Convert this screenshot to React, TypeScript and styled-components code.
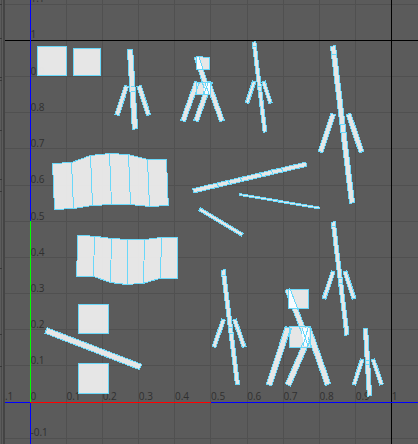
import React from "react";
import styled, { createGlobalStyle } from "styled-components";

const GlobalStyle = createGlobalStyle`
  body { margin: 0; background: #5b5b5b; overflow: hidden; }
`;
const Editor = styled.main`
  display: flex;
  width: 418px;
  height: 444px;
`;
const Gutter = styled.svg`
  box-sizing: border-box;
  display: block;
  width: 5px;
  height: 444px;
  flex: none;
  background: #5b5b5b;
  border-right: 2px solid #444;
  shape-rendering: crispEdges;
`;
const Viewport = styled.svg`
  display: block;
  width: 413px;
  height: 444px;
  flex: none;
  shape-rendering: crispEdges;
`;
const GridLine = styled.line`
  stroke: #505050;
  stroke-width: 1px;
`;
const Axis = styled.line<{ $color: string }>`
  stroke: ${(p) => p.$color};
  stroke-width: 1px;
`;
const Label = styled.text`
  font: 500 10px "Open Sans", "Noto Sans", sans-serif;
  fill: #303030;
`;
const Face = styled.polygon`
  fill: #e9e9e9;
  fill-opacity: 0.98;
  stroke: #69d8fa;
  stroke-width: 1px;
`;
const Overlap = styled.polygon`
  fill: #f8fbff;
`;
const Edge = styled.polyline`
  fill: none;
  stroke: #69d8fa;
  stroke-width: 1px;
`;
const BoxOutline = styled.polygon`
  fill: none;
  stroke: #69d8fa;
  stroke-width: 1px;
`;

const columns = [66, 102, 138, 174, 210, 247, 283, 319, 355];
const rows = [4, 76, 112, 148, 185, 221, 257, 293, 329, 365, 438];
const gutterMarks = [4, 38, 77, 80, 130, 179, 191, 268, 334, 366];

type Bar = [number, number, number, number, number];
const bars: Bar[] = [
  [130, 49.5, 135, 129, 5],
  [126.5, 86, 117, 115, 4],
  [139, 86, 148.5, 115, 4],
  [196.5, 57, 208, 92, 4.5],
  [197, 82, 183, 121, 4.5],
  [210, 82, 196, 121, 4.5],
  [208, 82, 222, 121, 4.5],
  [254, 42, 265, 132, 3.4],
  [254.2, 81.5, 247, 103, 3.2],
  [263.5, 81.5, 270.5, 103, 3.2],
  [333, 46, 352, 203, 4.8],
  [333.2, 114, 320.5, 152, 4.6],
  [348.5, 114, 361.5, 152, 4.6],
  [193.2, 190.8, 306.3, 164.2, 4],
  [239.7, 194.5, 319.2, 208, 1.5],
  [199.6, 209.2, 242.3, 234.8, 3],
  [333.2, 222, 347, 335, 3.8],
  [333.2, 271.5, 324, 298.5, 3.5],
  [345, 271.5, 354, 298.5, 3.5],
  [223.2, 270, 237.5, 384.5, 3.8],
  [223.5, 319.5, 214, 347, 3.5],
  [234.5, 319.5, 244.2, 347, 3.5],
  [287.5, 289.5, 308, 342, 4.8],
  [288, 327.5, 269, 385, 5.4],
  [307, 341, 288, 385, 5.4],
  [308, 328, 328, 384.5, 5.4],
  [365.5, 328.5, 369.5, 396, 4],
  [362.3, 359.5, 354, 384.5, 3.4],
  [373, 359.5, 381.5, 384.5, 3.4],
  [46, 330.5, 140.5, 367, 5.5],
];

function corners([x1, y1, x2, y2, w]: Bar): string {
  const width = w + 0.3;
  const length = Math.hypot(x2 - x1, y2 - y1);
  const nx = (-(y2 - y1) / length) * width / 2;
  const ny = ((x2 - x1) / length) * width / 2;
  return [[x1 + nx, y1 + ny], [x2 + nx, y2 + ny], [x2 - nx, y2 - ny], [x1 - nx, y1 - ny]]
    .map((p) => p.join(",")).join(" ");
}

const shells = [
  "37.5,46.5 66.5,46.5 66.5,75.5 37.5,75.5",
  "73.5,48.5 100.5,48.5 100.5,75.5 73.5,75.5",
  "78.5,304.5 108.5,304.5 108.5,333.5 78.5,333.5",
  "78.5,363.5 108.5,363.5 108.5,393.5 78.5,393.5",
  "52.5,163.5 71.5,162.5 90.5,155.5 109.5,153.5 128.5,154.5 147.5,159.5 166.5,159.5 168.3,205.5 149.5,206.5 130.5,204.5 111.5,204.5 92.5,205.5 73.5,208.5 54.5,209.5",
  "77.5,235.5 94.5,236.2 111.5,238.5 127.5,239.5 144.5,239.5 161.5,237.5 177.8,237.5 177.4,278.5 160.5,278.2 143.5,283.3 126.5,284.5 110.5,282.5 93.5,276.5 76.7,276.5",
];
const seams = [
  "71.5,162 73.5,208", "90.5,155 92.5,205", "109.5,153 111.5,204", "128.5,154 130.5,204", "147.5,160 149.5,206",
  "94.5,236 93.5,276", "111.5,238 110.5,282", "127.5,239 127.4,284", "144.5,239 143.5,283", "161.5,237 160.5,278",
  "131,86.5 135,86.5", "131,91.5 135,91.5",
  "253,46.5 257,46.5", "258,86.5 261,86.5", "258,91.5 262,91.5",
  "331,54.5 336,54.5", "340,124.5 345,124.5", "341,132.5 346,132.5",
  "332,226.5 336,226.5", "338,278.5 342,278.5", "338,283.5 342,283.5",
  "222,275.5 226,275.5", "229,327.5 232,327.5", "229,333.5 233,333.5",
  "366,360.5 370,360.5", "366,364.5 370,364.5",
  "217,183 219,188", "228,180 230,185", "240,177 242,182", "260,172 262,177", "271,169 273,175", "281,167 283,172",
];

const boxes = [
  "196.5,56.5 209.5,57.5 209.5,69.5 196.5,69.5",
  "196.5,82.5 210.5,82.5 210.5,94.5 196.5,94.5",
  "288.5,289.5 308.5,289.5 308.5,308.5 288.5,308.5",
  "289.5,326.5 310.5,326.5 310.5,347.5 289.5,347.5",
];
const overlaps = [
  "197,57 199,57 203,69 197,69",
  "205,83 210,83 210,94 204,94",
  "289,290 291,290 298,308 289,308",
  "302,328 309,328 308,346 303,346",
];
const overlapEdges = [
  "199,57 203.5,70", "205,83 209,94", "208,83 204,94",
  "290.5,290 297.5,308", "291.5,328 289.5,336", "302,328 308,346", "308,328 303,346",
];

export default function App() {
  return (
    <>
      <GlobalStyle />
      <Editor>
        <Gutter viewBox="0 0 3 444">
          <line x1="1.5" x2="1.5" y1="0" y2="444" stroke="#4b4b4b" />
          {gutterMarks.map((y) => <line key={y} x1="0" x2="2" y1={y + 0.5} y2={y + 0.5} stroke="#383838" />)}
        </Gutter>
        <Viewport viewBox="5 0 413 444" aria-label="UV editor">
          {columns.map((x) => <GridLine key={x} x1={x + 0.5} y1="0" x2={x + 0.5} y2="444" />)}
          {rows.map((y) => <GridLine key={y} x1="5" y1={y + 0.5} x2="418" y2={y + 0.5} />)}
          <Label x="30.5" y="2">1.1</Label>
          <Label x="30.5" y="38">1</Label>
          {["0.9", "0.8", "0.7", "0.6", "0.5", "0.4", "0.3", "0.2", "0.1"].map((value, i) => (
            <Label key={value} x="30.5" y={Math.round(75 + i * 36.15)}>{value}</Label>
          ))}
          <Label x="30.5" y="436">-0.1</Label>
          <Label x="-4" y="400">-0.1</Label>
          <Label x="30.5" y="400">0</Label>
          {["0.1", "0.2", "0.3", "0.4", "0.5", "0.6", "0.7", "0.8", "0.9", "1"].map((value, i) => (
            <Label key={value} x={66.5 + i * 36.15} y="400">{value}</Label>
          ))}
          <Axis $color="#000" x1="5" y1="40.5" x2="418" y2="40.5" />
          <Axis $color="#000" x1="391.5" y1="0" x2="391.5" y2="444" />
          <Axis $color="#00f" x1="30.5" y1="0" x2="30.5" y2="444" />
          <Axis $color="#00f" x1="5" y1="402.5" x2="418" y2="402.5" />
          <Axis $color="#f00" x1="30" y1="402.5" x2="211" y2="402.5" />
          <Axis $color="#0f0" x1="30.5" y1="221" x2="30.5" y2="402" />
          {shells.map((points) => <Face key={points} points={points} />)}
          {boxes.map((points) => <Face key={points} points={points} />)}
          {bars.map((bar) => <Face key={bar.join()} points={corners(bar)} />)}
          {overlaps.map((points) => <Overlap key={points} points={points} />)}
          {boxes.map((points) => <BoxOutline key={points} points={points} />)}
          {[...seams, ...overlapEdges].map((points) => <Edge key={points} points={points} />)}
        </Viewport>
      </Editor>
    </>
  );
}
